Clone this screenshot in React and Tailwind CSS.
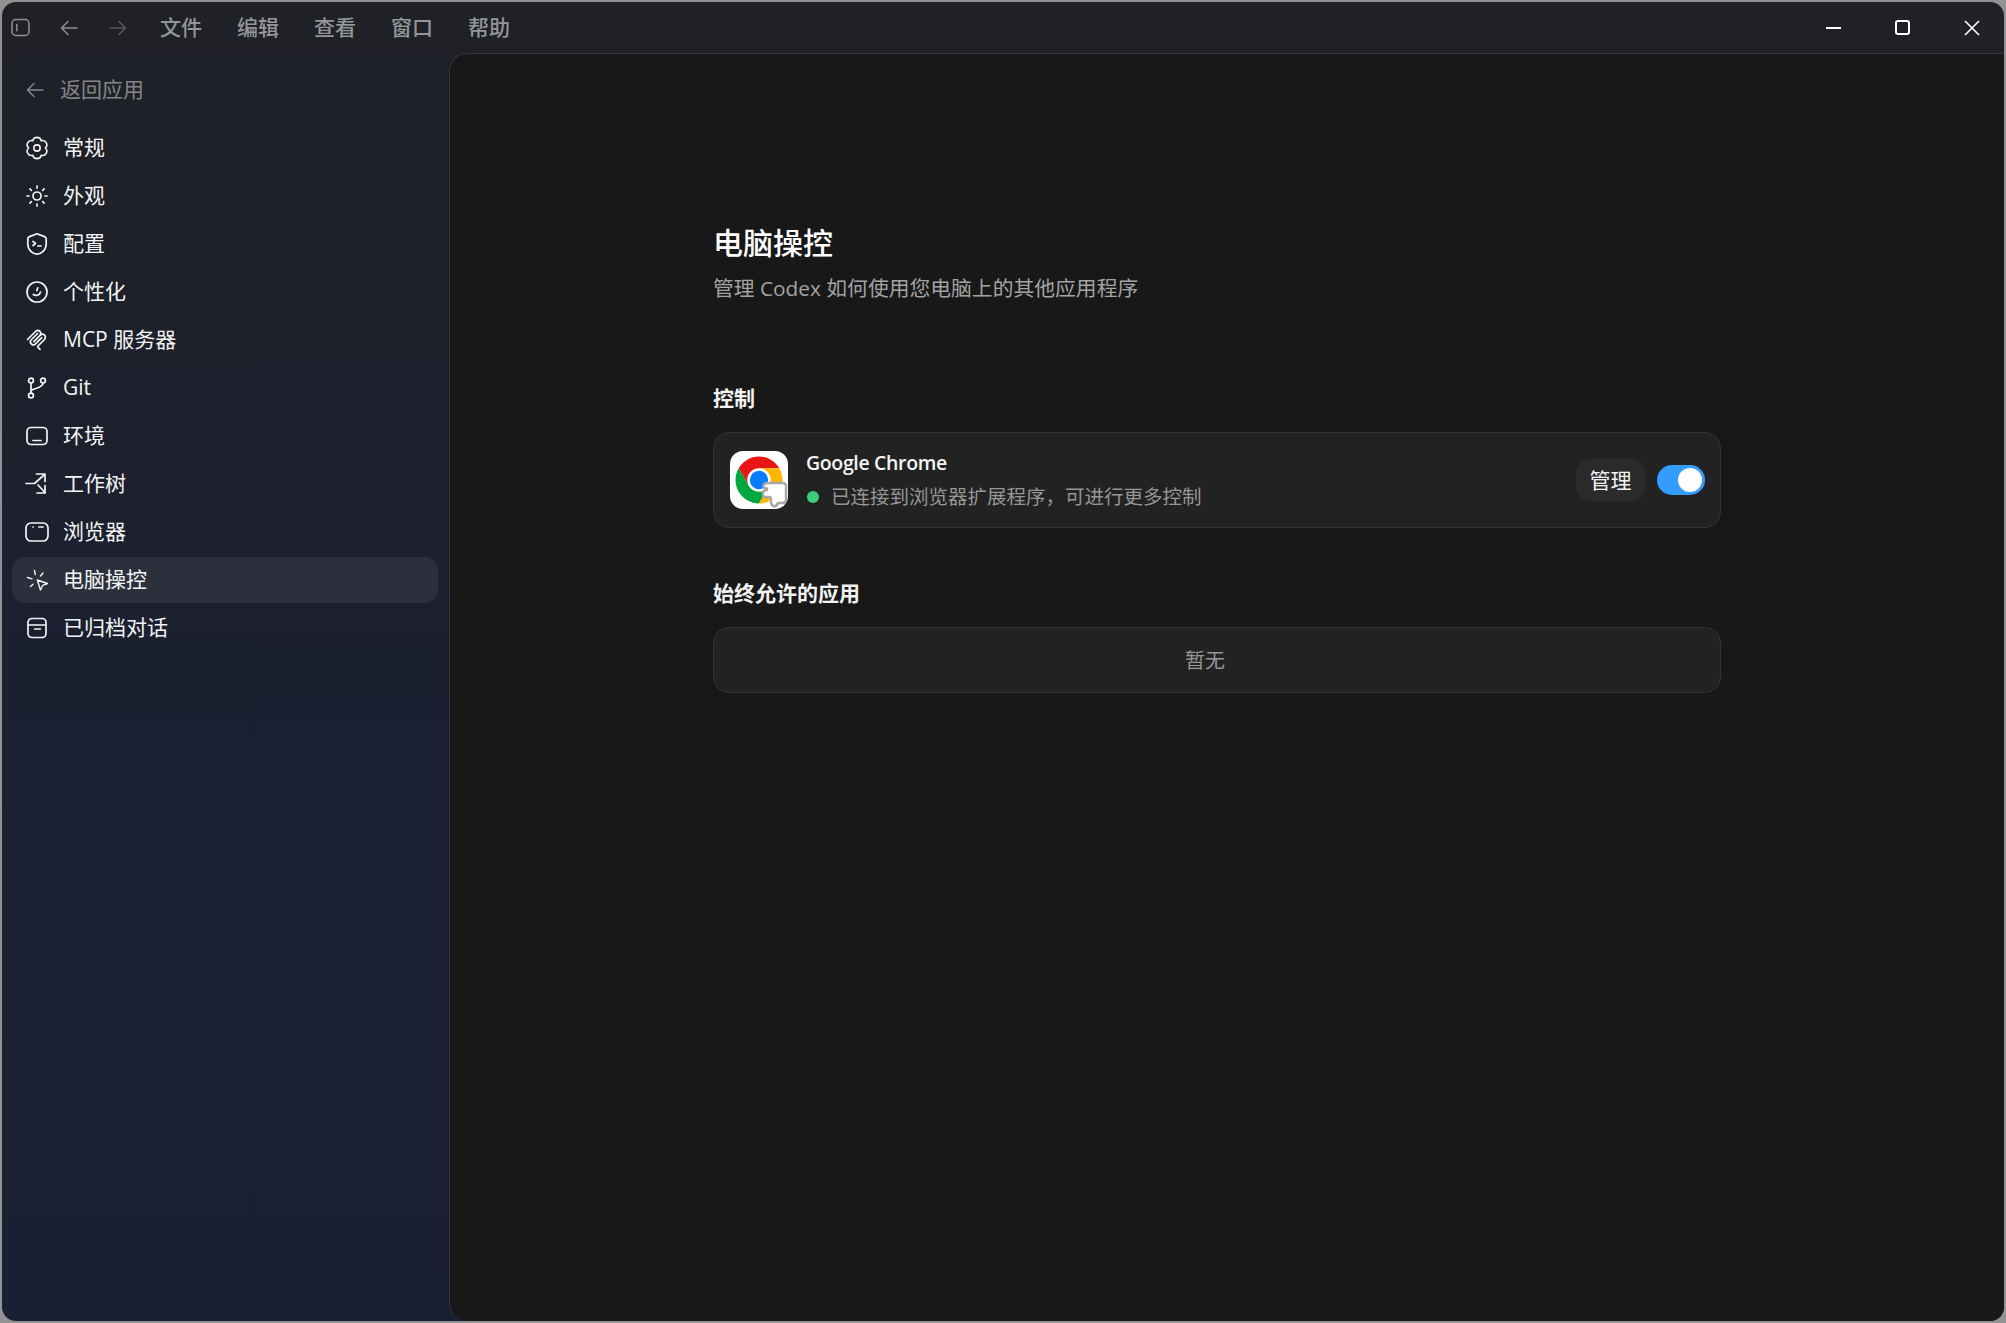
import React from 'react';
import { Sun } from 'lucide-react';

function Icon({ children, width = '1.7', className = 'w-6 h-6 shrink-0' }) {
  return (
    <svg viewBox="0 0 24 24" fill="none" stroke="currentColor" strokeWidth={width} strokeLinecap="round" strokeLinejoin="round" className={className}>
      {children}
    </svg>
  );
}

const GearIcon = () => (
  <Icon>
    <g transform="translate(12 12) scale(0.93) translate(-12 -12)">
      <path d="M16.5 4.2A4.6 4.6 0 0 0 7.5 4.2A4.6 4.6 0 0 0 3 12A4.6 4.6 0 0 0 7.5 19.8A4.6 4.6 0 0 0 16.5 19.8A4.6 4.6 0 0 0 21 12A4.6 4.6 0 0 0 16.5 4.2Z" />
      <circle cx="12" cy="12" r="3.4" />
    </g>
  </Icon>
);
const ShieldIcon = () => (
  <Icon>
    <path d="M12 1.8L19.5 4.6Q21.2 5.3 21.2 7V12C21.2 18 16 22.2 12 22.2C8 22.2 2.8 18 2.8 12V7Q2.8 5.3 4.5 4.6Z" />
    <path d="M8 9.5L10.5 11.5L8 13.5" />
    <path d="M12.8 14H16" />
  </Icon>
);
const SmileIcon = () => (
  <Icon>
    <circle cx="12" cy="12" r="10" />
    <path d="M12.8 7.8L11.8 10.5" />
    <path d="M8.3 14.5C10.5 16.2 14.6 15.6 15.6 12" />
  </Icon>
);
const McpIcon = () => (
  <Icon>
    <path d="M2.5 11.5L11 3a3 3 0 0 1 4.2 4.2L8.8 13.6" />
    <path d="M15.2 7.2a3 3 0 0 1 4.3 4.3l-6.5 6.5a1 1 0 0 0 0 1.4l2 2" />
    <path d="M12.5 5.5L6 12a3 3 0 0 0 4.2 4.2L16.7 9.7" />
  </Icon>
);
const GitIcon = () => (
  <Icon>
    <circle cx="6" cy="4.5" r="2.4" />
    <circle cx="6" cy="19.5" r="2.4" />
    <circle cx="18" cy="4.5" r="2.4" />
    <path d="M6 7V17" />
    <path d="M18 7C18 12 10 12 6 14.5" />
  </Icon>
);
const EnvIcon = () => (
  <Icon>
    <rect x="2" y="3.5" width="20" height="17" rx="4" />
    <path d="M8 16.5H16" />
  </Icon>
);
const WorktreeIcon = () => (
  <Icon>
    <path d="M1 11.5H9.5L19.5 2.5" />
    <path d="M11.5 2H20V9.5" />
    <path d="M13 13L20 20.5" />
    <path d="M12 21H20V13.5" />
  </Icon>
);
const BrowserIcon = () => (
  <Icon>
    <rect x="1" y="3" width="22" height="18" rx="5" />
    <path d="M8 7H8.1" />
    <path d="M14 7H18" />
  </Icon>
);
const CursorIcon = () => (
  <Icon width="1.4">
    <path d="M12.3 12L22.5 15.5L17.8 17.3L15.5 22Z" />
    <path d="M9.5 2.5L10.3 6.5" />
    <path d="M18 5L15.5 8" />
    <path d="M2.5 9.5L7 10.8" />
    <path d="M5.5 18.5L8 16.3" />
  </Icon>
);
const ArchiveIcon = () => (
  <Icon>
    <rect x="3" y="2.5" width="18" height="19" rx="4" />
    <path d="M3 9H21" />
    <path d="M9.7 13H15.3" />
  </Icon>
);

const navItems = [
  { label: '常规', icon: <GearIcon /> },
  { label: '外观', icon: <Sun className="w-6 h-6 shrink-0" strokeWidth={1.7} /> },
  { label: '配置', icon: <ShieldIcon /> },
  { label: '个性化', icon: <SmileIcon /> },
  { label: 'MCP 服务器', icon: <McpIcon /> },
  { label: 'Git', icon: <GitIcon /> },
  { label: '环境', icon: <EnvIcon /> },
  { label: '工作树', icon: <WorktreeIcon /> },
  { label: '浏览器', icon: <BrowserIcon /> },
  { label: '电脑操控', icon: <CursorIcon />, active: true },
  { label: '已归档对话', icon: <ArchiveIcon /> },
];

function TitleBar() {
  return (
    <header className="h-[51px] shrink-0 flex items-center">
      <div className="flex items-center pl-[9px] text-[#8f9094]">
        <svg viewBox="0 0 18 18" fill="none" stroke="currentColor" strokeWidth="1.4" className="w-[19px] h-[19px]">
          <rect x="1" y="1.5" width="16" height="15" rx="3.5" />
          <path d="M5.5 5.5V12.5" />
        </svg>
        <svg viewBox="0 0 18 18" fill="none" stroke="currentColor" strokeWidth="1.5" strokeLinecap="round" strokeLinejoin="round" className="w-[18px] h-[18px] ml-[30px]">
          <path d="M17 9H1.5M8 2.5L1.5 9L8 15.5" />
        </svg>
        <svg viewBox="0 0 18 18" fill="none" stroke="currentColor" strokeWidth="1.5" strokeLinecap="round" strokeLinejoin="round" className="w-[18px] h-[18px] ml-[31px] text-[#55565a]">
          <path d="M1 9H16.5M10 2.5L16.5 9L10 15.5" />
        </svg>
      </div>
      <nav className="flex items-center gap-[35px] ml-[33px] text-[21px] font-medium text-[#95969a]">
        {['文件', '编辑', '查看', '窗口', '帮助'].map(m => (
          <span key={m}>{m}</span>
        ))}
      </nav>
      <div className="ml-auto flex items-center text-white">
        <span className="w-[63px] flex justify-center">
          <span className="w-[15px] h-[2px] bg-white" />
        </span>
        <span className="w-[74px] flex justify-center">
          <span className="w-[15px] h-[15px] rounded-[3px] border-2 border-white" />
        </span>
        <span className="w-[65px] flex justify-center">
          <svg viewBox="0 0 16 16" stroke="currentColor" strokeWidth="1.6" className="w-4 h-4">
            <path d="M1 1L15 15M15 1L1 15" />
          </svg>
        </span>
      </div>
    </header>
  );
}

function Sidebar() {
  return (
    <aside className="w-[447px] shrink-0 pt-[14px] pl-[10px] pr-[11px]">
      <div className="h-[46px] flex items-center gap-[16px] pl-[14px] text-[21px] text-[#85868a]">
        <svg viewBox="0 0 18 18" fill="none" stroke="currentColor" strokeWidth="1.5" strokeLinecap="round" strokeLinejoin="round" className="w-[18px] h-[18px]">
          <path d="M17 9H1.5M8 2.5L1.5 9L8 15.5" />
        </svg>
        <span>返回应用</span>
      </div>
      <div className="mt-[12px] flex flex-col gap-[2px]">
        {navItems.map(item => (
          <div
            key={item.label}
            className={`h-[46px] flex items-center gap-[14px] pl-[13px] rounded-[14px] text-[21px] text-[#f4f4f4] ${item.active ? 'bg-[#2c303d]' : ''}`}
          >
            {item.icon}
            <span>{item.label}</span>
          </div>
        ))}
      </div>
    </aside>
  );
}

function ChromeLogo() {
  return (
    <div className="w-[58px] h-[58px] shrink-0 rounded-[13px] bg-white">
      <svg viewBox="0 0 58 58" className="w-full h-full">
        <path d="M29 17.25L49.35 17.25A23.5 23.5 0 0 0 8.65 17.25L18.82 34.87Z" fill="#ea1515" />
        <path d="M18.82 34.87L8.65 17.25A23.5 23.5 0 0 0 29 52.5L39.18 34.87Z" fill="#00a63e" />
        <path d="M39.18 34.87L29 52.5A23.5 23.5 0 0 0 49.35 17.25L29 17.25Z" fill="#ffb600" />
        <circle cx="29" cy="29" r="11.75" fill="#fff" />
        <circle cx="29" cy="29" r="9.2" fill="#0a7cff" />
        <path
          d="M37 32H53a3 3 0 0 1 3 3V49a3 3 0 0 1-3 3H48q-1 3-3.5 3.5q-3-.8-3.5-3.5V48a2 2 0 0 0-2-2H35a2 2 0 0 1-2-2V41.5a2 2 0 0 1 2-2H36q1 0 1-1V37.5H36q-2.5-.5-2.5-2.8T37 32Z"
          fill="#fff"
          stroke="#a8a8a8"
          strokeWidth="2.4"
          strokeLinejoin="round"
        />
      </svg>
    </div>
  );
}

function Content() {
  return (
    <main className="flex-1 bg-[#181818] border-l border-t border-[#33353a] rounded-l-[18px] pl-[263px] pt-[169px]">
      <div className="w-[1008px]">
        <h1 className="text-[30px] leading-[40px] font-medium text-white">电脑操控</h1>
        <p className="mt-[11px] text-[20.8px] leading-[28px] text-[#a3a3a3]">管理 Codex 如何使用您电脑上的其他应用程序</p>

        <h2 className="mt-[82px] text-[21px] leading-[28px] font-semibold text-[#f2f2f2]">控制</h2>
        <div className="mt-[20px] h-[96px] flex items-center pl-[16px] pr-[15px] bg-[#222222] border border-[#333333] rounded-[16px]">
          <ChromeLogo />
          <div className="ml-[18px] pb-[1px]">
            <div className="text-[19.5px] leading-[28px] font-semibold tracking-[-0.35px] text-[#f4f4f4]">Google Chrome</div>
            <div className="mt-[6px] flex items-center text-[19.5px] leading-[28px] text-[#969696]">
              <span className="ml-[1px] w-3 h-3 rounded-full bg-[#3ecf7c]" />
              <span className="ml-[12px]">已连接到浏览器扩展程序，可进行更多控制</span>
            </div>
          </div>
          <button className="ml-auto w-[69px] h-[42px] pt-[2px] rounded-[14px] bg-[#2b2b2b] text-[21px] text-[#f2f2f2]">管理</button>
          <div className="ml-[12px] w-[48px] h-[30px] p-[3px] rounded-full bg-[#339cff] flex justify-end">
            <span className="w-6 h-6 rounded-full bg-white" />
          </div>
        </div>

        <h2 className="mt-[51px] text-[21px] leading-[28px] font-semibold text-[#f2f2f2]">始终允许的应用</h2>
        <div className="mt-[20px] h-[66px] flex items-center justify-center pr-[24px] pt-[2px] bg-[#222222] border border-[#333333] rounded-[16px] text-[20px] text-[#969696]">
          暂无
        </div>
      </div>
    </main>
  );
}

export default function App() {
  return (
    <div className="w-[2006px] h-[1323px] p-[2px] bg-[#929292] overflow-hidden font-['Open_Sans','Noto_Sans_CJK_SC',sans-serif]">
      <div className="h-full flex flex-col rounded-[14px] overflow-hidden bg-gradient-to-b from-[#1f2126] via-[#1b2031] via-50% to-[#1a2033]">
        <TitleBar />
        <div className="flex-1 min-h-0 flex">
          <Sidebar />
          <Content />
        </div>
      </div>
    </div>
  );
}
